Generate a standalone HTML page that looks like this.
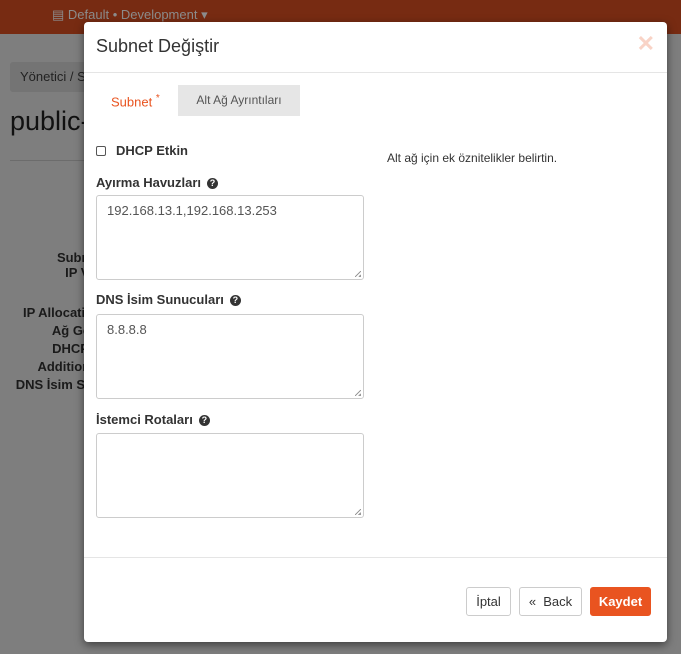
<!DOCTYPE html>
<html><head><meta charset="utf-8"><style>
*{box-sizing:border-box}
body{margin:0;width:681px;height:654px;overflow:hidden;background:#7e7e7e;font-family:"Liberation Sans",sans-serif;position:relative;color:#333}
.top{position:absolute;left:0;top:0;width:681px;height:34px;background:#772b12}
.top span{position:absolute;left:52px;top:7px;font-size:13px;color:#8c8c8c}
.bc{position:absolute;left:10px;top:62px;width:120px;height:30px;background:#747474;border-radius:3px;font-size:13px;color:#222;padding:7px 10px}
.pub{position:absolute;left:10px;top:106px;font-size:27px;color:#111}
.hr{position:absolute;left:10px;top:160px;width:120px;height:1px;background:#6c6c6c}
.lbl{position:absolute;right:580px;font-size:13px;font-weight:bold;color:#1a1a1a;white-space:nowrap}
.modal{position:absolute;left:84px;top:22px;width:583px;height:620px;background:#fff;border-radius:4px;box-shadow:0 3px 9px rgba(0,0,0,.5);overflow:hidden}
.mh{position:absolute;left:12px;top:14px;font-size:18px;color:#333}
.x{position:absolute;right:12px;top:9px;font-size:22px;color:#f9d3c6;font-weight:bold}
.d1{position:absolute;left:0;top:50px;width:100%;height:1px;background:#e5e5e5}
.t1{position:absolute;left:27px;top:71px;font-size:13px;color:#e95420}
.t1 sup{font-size:10px}
.t2{position:absolute;left:94px;top:63px;width:122px;height:31px;background:#e6e6e6;font-size:12px;color:#555;text-align:center;line-height:31px}
.cb{position:absolute;left:12px;top:124px;width:10px;height:10px;border:1px solid #555;border-radius:2px}
.f{position:absolute;font-size:13px;font-weight:bold;color:#333}
.q{display:inline-block;width:11px;height:11px;border-radius:50%;background:#333;color:#fff;font-size:9px;text-align:center;line-height:11px;margin-left:6px;vertical-align:1px}
.ta{position:absolute;left:12px;width:268px;height:85px;border:1px solid #ccc;border-radius:3px;font-size:13px;color:#555;padding:7px 10px}
.ta:after{content:"";position:absolute;right:2px;bottom:2px;width:6px;height:6px;background:linear-gradient(135deg,transparent 45%,#999 45%,#999 55%,transparent 55%,transparent 75%,#999 75%)}
.rt{position:absolute;left:303px;top:129px;font-size:12px;color:#333}
.d2{position:absolute;left:0;top:535px;width:100%;height:1px;background:#e5e5e5}
.b{position:absolute;top:565px;height:29px;border:1px solid #ccc;border-radius:3px;font-size:13px;color:#333;line-height:27px;text-align:center;background:#fff}
</style></head><body>
<div class="top"><span>▤ Default • Development ▾</span></div>
<div class="bc">Yönetici / S</div>
<div class="pub">public-n</div>
<div class="hr"></div>
<div class="lbl" style="top:250px">Subnet</div>
<div class="lbl" style="top:265px">IP Ver</div>
<div class="lbl" style="top:305px">IP Allocation</div>
<div class="lbl" style="top:323px">Ağ Geçi</div>
<div class="lbl" style="top:341px">DHCP E</div>
<div class="lbl" style="top:359px">Additional</div>
<div class="lbl" style="top:377px">DNS İsim Sun</div>
<div class="modal">
<div class="mh">Subnet Değiştir</div><div class="x">✕</div>
<div class="d1"></div>
<div class="t1">Subnet <sup>*</sup></div>
<div class="t2">Alt Ağ Ayrıntıları</div>
<div class="cb"></div>
<div class="f" style="left:32px;top:121px">DHCP Etkin</div>
<div class="f" style="left:12px;top:153px">Ayırma Havuzları<span class="q">?</span></div>
<div class="ta" style="top:173px">192.168.13.1,192.168.13.253</div>
<div class="f" style="left:12px;top:270px">DNS İsim Sunucuları<span class="q">?</span></div>
<div class="ta" style="top:292px">8.8.8.8</div>
<div class="f" style="left:12px;top:390px">İstemci Rotaları<span class="q">?</span></div>
<div class="ta" style="top:411px"></div>
<div class="rt">Alt ağ için ek öznitelikler belirtin.</div>
<div class="d2"></div>
<div class="b" style="left:382px;width:45px">İptal</div>
<div class="b" style="left:435px;width:63px">«&nbsp; Back</div>
<div class="b" style="left:506px;width:61px;background:#e95420;border-color:#e95420;color:#fff;font-weight:bold">Kaydet</div>
</div>
</body></html>
